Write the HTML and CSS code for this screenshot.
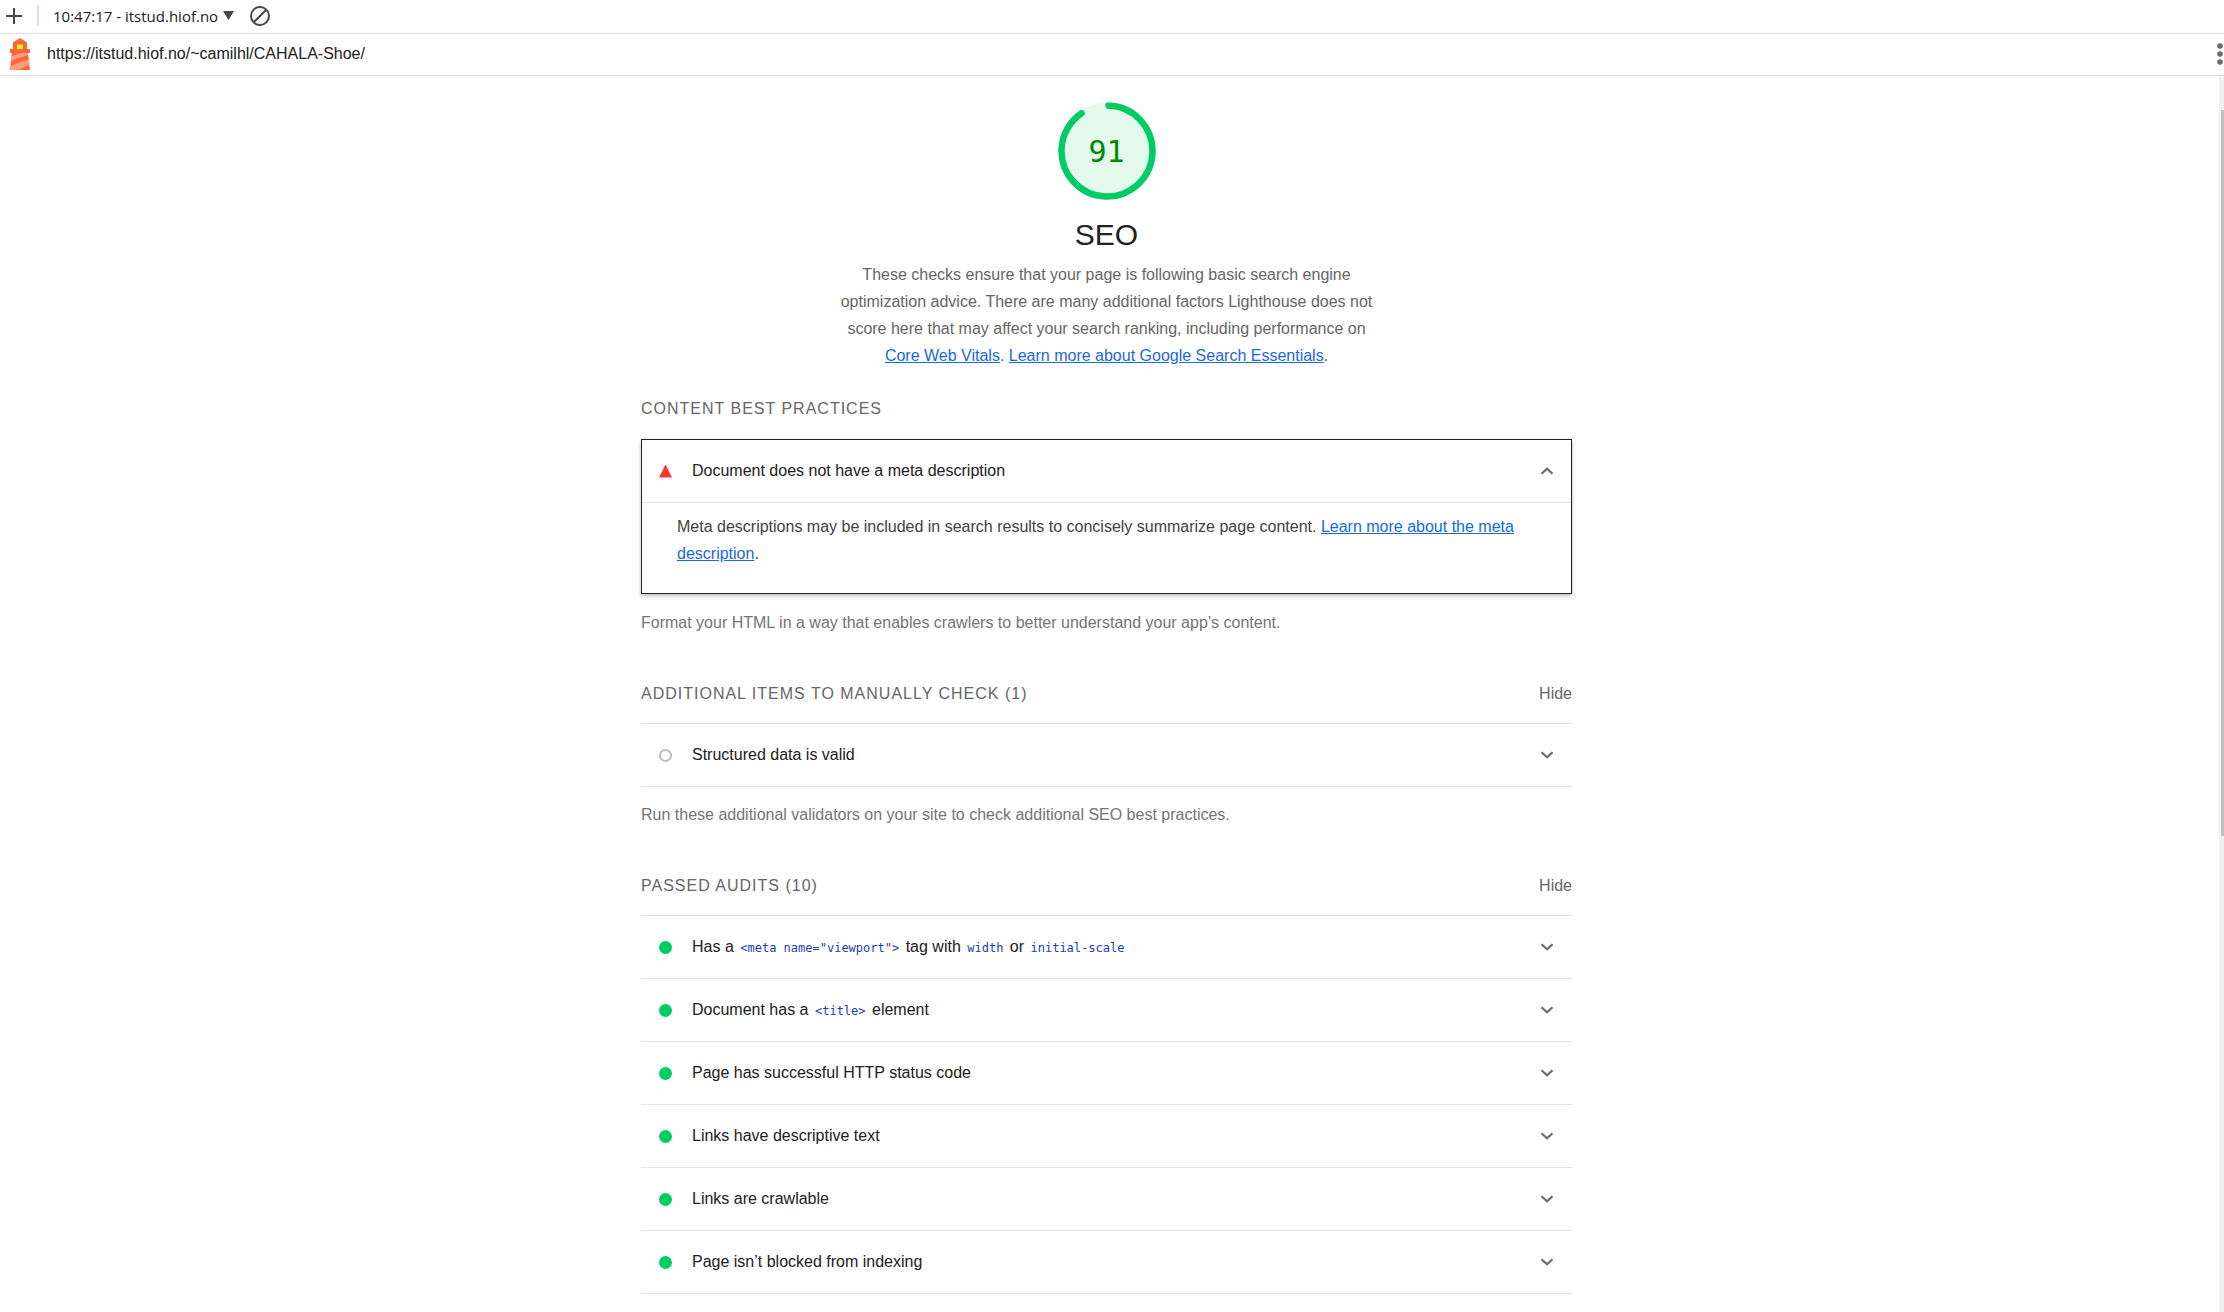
FILE: index.html
```html
<!DOCTYPE html>
<html lang="en">
<head>
<meta charset="utf-8">
<title>Lighthouse report</title>
<link rel="stylesheet" href="styles.css">
</head>
<body>
<svg class="symbols" width="0" height="0">
  <symbol id="chevron" viewBox="0 0 14 8"><path d="M1.500 1.200 7 6.300l5.500-5.100" fill="none" stroke="#6b6b6b" stroke-width="2.200"/></symbol>
</svg>
<header>
  <div class="toolbar">
    <button class="icon-button" aria-label="New report">
      <svg width="18" height="18" viewBox="0 0 18 18"><path d="M9 1v16M1 9h16" stroke="#474747" stroke-width="2"/></svg>
    </button>
    <span class="divider"></span>
    <button class="report-picker">10:47:17 - itstud.hiof.no
      <svg width="11" height="9" viewBox="0 0 11 9"><path d="M0 0h11L5.500 9z" fill="#474747"/></svg>
    </button>
    <button class="icon-button" aria-label="Clear all">
      <svg width="20" height="20" viewBox="0 0 20 20" fill="none" stroke="#474747" stroke-width="2"><circle cx="10" cy="10" r="9"/><path d="M16.300 3.700 3.700 16.300"/></svg>
    </button>
  </div>
  <div class="topbar">
    <svg class="logo" width="20" height="32" viewBox="0 0 20 32">
      <path d="M10 0l7 4.500V11h3v4h-2l2 17H0l2-17H0v-4h3V4.500z" fill="#ff6633"/>
      <path d="M2 15h16l.2 2L1.300 22.500z" fill="#ff9e80"/>
      <path d="M2 15h9L1.800 18z" fill="#ff6633"/>
      <path d="M.6 28L19 21l.5 5.500L8 32H0z" fill="#ff9e80"/>
      <path d="M7 6.500h6V11H7z" fill="#fff02e"/>
    </svg>
    <a class="url" href="#">https://itstud.hiof.no/~camilhl/CAHALA-Shoe/</a>
    <button class="menu" aria-label="Tools menu">
      <svg width="6" height="24" viewBox="0 0 6 24" fill="#6b6b6b"><circle cx="3" cy="4" r="2.800"/><circle cx="3" cy="12" r="2.800"/><circle cx="3" cy="20" r="2.800"/></svg>
    </button>
  </div>
</header>
<div class="viewport">
  <main class="report">
    <section class="category">
      <div class="gauge">
        <svg width="98" height="98" viewBox="0 0 98 98">
          <circle cx="49" cy="49" r="48" fill="#e3f9ec"/>
          <circle cx="49" cy="49" r="45.500" fill="none" stroke="#0c6" stroke-width="6.500" stroke-linecap="round" pathLength="100" stroke-dasharray="90 100" transform="rotate(-88 49 49)"/>
        </svg>
        <span class="score">91</span>
      </div>
      <h1>SEO</h1>
      <p class="intro">These checks ensure that your page is following basic search engine optimization advice. There are many additional factors Lighthouse does not score here that may affect your search ranking, including performance on <a href="#">Core Web Vitals</a>. <a href="#">Learn more about Google Search Essentials</a>.</p>
    </section>

    <section class="group">
      <div class="group-head"><h2>Content Best Practices</h2></div>
      <details class="audit failed" open>
        <summary><span class="mark fail"></span><span class="title">Document does not have a meta description</span><svg class="chevron" width="14" height="8"><use href="#chevron"/></svg></summary>
        <p class="detail">Meta descriptions may be included in search results to concisely summarize page content. <a href="#">Learn more about the meta description</a>.</p>
      </details>
      <p class="note">Format your HTML in a way that enables crawlers to better understand your app’s content.</p>
    </section>

    <section class="group">
      <div class="group-head"><h2>Additional items to manually check (1)</h2><button class="toggle">Hide</button></div>
      <div class="audits">
        <details class="audit"><summary><span class="mark manual"></span><span class="title">Structured data is valid</span><svg class="chevron" width="14" height="8"><use href="#chevron"/></svg></summary></details>
      </div>
      <p class="note">Run these additional validators on your site to check additional SEO best practices.</p>
    </section>

    <section class="group">
      <div class="group-head"><h2>Passed audits (10)</h2><button class="toggle">Hide</button></div>
      <div class="audits">
        <details class="audit"><summary><span class="mark pass"></span><span class="title">Has a <code>&lt;meta name="viewport"&gt;</code> tag with <code>width</code> or <code>initial-scale</code></span><svg class="chevron" width="14" height="8"><use href="#chevron"/></svg></summary></details>
        <details class="audit"><summary><span class="mark pass"></span><span class="title">Document has a <code>&lt;title&gt;</code> element</span><svg class="chevron" width="14" height="8"><use href="#chevron"/></svg></summary></details>
        <details class="audit"><summary><span class="mark pass"></span><span class="title">Page has successful HTTP status code</span><svg class="chevron" width="14" height="8"><use href="#chevron"/></svg></summary></details>
        <details class="audit"><summary><span class="mark pass"></span><span class="title">Links have descriptive text</span><svg class="chevron" width="14" height="8"><use href="#chevron"/></svg></summary></details>
        <details class="audit"><summary><span class="mark pass"></span><span class="title">Links are crawlable</span><svg class="chevron" width="14" height="8"><use href="#chevron"/></svg></summary></details>
        <details class="audit"><summary><span class="mark pass"></span><span class="title">Page isn’t blocked from indexing</span><svg class="chevron" width="14" height="8"><use href="#chevron"/></svg></summary></details>
      </div>
    </section>
  </main>
  <div class="scrollbar"><div class="thumb"></div></div>
</div>
</body>
</html>
```
FILE: styles.css
```css
* { box-sizing: border-box; }

body {
  margin: 0;
  min-height: 100vh;
  display: flex;
  flex-direction: column;
  background: #fefefe;
  color: #212121;
  font: 16px/24px "Liberation Sans", Arial, sans-serif;
}

h1, h2, p { margin: 0; font-weight: 400; }

button {
  border: 0;
  padding: 0;
  background: none;
  color: inherit;
  font: inherit;
}

a { color: #1a68de; }

.symbols { display: none; }

/* Header bars */
.toolbar {
  display: flex;
  align-items: center;
  height: 34px;
  padding: 0 5px 2px;
  border-bottom: 1px solid #d3e3ee;
}

.icon-button { display: flex; }

.divider {
  width: 2px;
  height: 21px;
  margin: 0 14px;
  background: #d3e0fb;
}

.report-picker {
  display: flex;
  align-items: center;
  gap: 5px;
  margin-right: 16px;
  font: 15px/24px "Open Sans", sans-serif;
}

.topbar {
  display: flex;
  align-items: center;
  height: 42px;
  padding: 0 0 2px 10px;
  border-bottom: 1px solid #dcdcdc;
}

.url {
  flex: 1;
  margin-left: 17px;
  color: #212121;
  text-decoration: none;
}

.menu { display: flex; margin-right: 1px; }

/* Scrolling area */
.viewport { flex: 1; display: flex; }

.report {
  flex: 1;
  max-width: 931px;
  margin: 0 auto;
  padding: 26px 0 18px;
}

.scrollbar {
  width: 5px;
  margin-left: 6px;
  padding-top: 34px;
  background: #f0f0f0;
}

.thumb {
  height: 726px;
  margin-left: 2px;
  background: #c1c1c1;
}

/* Category header */
.category {
  display: flex;
  flex-direction: column;
  align-items: center;
  text-align: center;
}

.gauge { display: grid; place-items: center; }
.gauge > * { grid-area: 1 / 1; }

.score {
  padding-top: 2px;
  color: #080;
  font: 30px/40px "DejaVu Sans Mono", monospace;
}

h1 {
  margin: 15px 0 6px;
  font-size: 30px;
  line-height: 40px;
}

.intro {
  max-width: 550px;
  color: #666;
  line-height: 27px;
}

/* Audit groups */
.group { padding-top: 28px; }
.group + .group { padding-top: 47px; }

.group-head {
  display: flex;
  justify-content: space-between;
  padding-bottom: 17px;
  color: #666;
}

.group:first-of-type .group-head { padding-bottom: 18px; }

h2 {
  font-size: 16px;
  letter-spacing: 1px;
  text-transform: uppercase;
}

.audits { border-top: 1px solid #e4e4e4; }
.audit { border-bottom: 1px solid #e4e4e4; }

summary {
  display: flex;
  align-items: center;
  height: 62px;
  padding: 0 18px;
  list-style: none;
}

.title { flex: 1; margin-left: 20px; }

code {
  padding: 0 2px;
  color: #1a3fb8;
  font: 12px "DejaVu Sans Mono", monospace;
}

.mark { width: 13px; height: 13px; }
.pass { border-radius: 50%; background: #0c6; }
.manual { border: 2px solid #bdbdbd; border-radius: 50%; }
.fail { background: #f33; clip-path: polygon(50% 0, 100% 100%, 0 100%); }

.failed {
  margin-top: 1px;
  margin-bottom: 1px;
  border: 1px solid #212121;
  box-shadow: 0 2px 4px rgba(0, 0, 0, .25);
}

.failed summary { padding: 0 17px; }
.failed .chevron { transform: rotate(180deg); }

.detail {
  padding: 10px 35px 26px;
  border-top: 1px solid #e4e4e4;
  color: #424242;
  line-height: 27px;
}

.note { padding-top: 16px; color: #757575; }
```
